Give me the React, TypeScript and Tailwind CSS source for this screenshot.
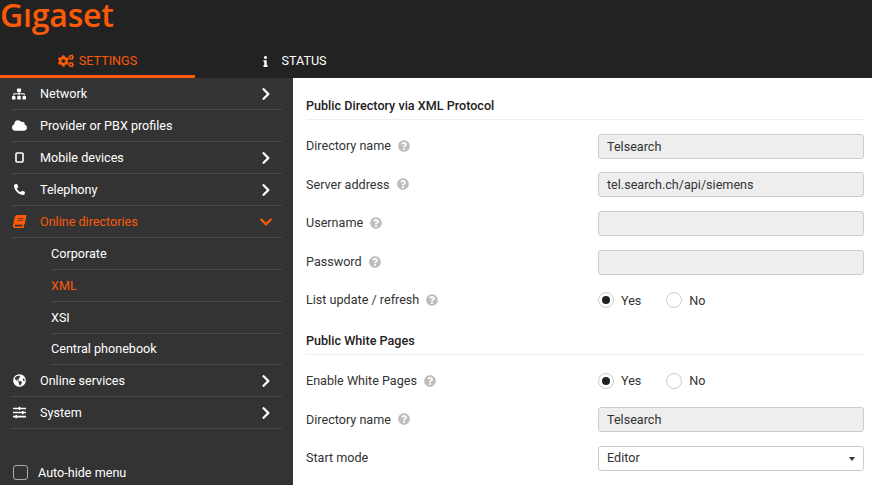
import React from "react";
import { FaCogs, FaInfo, FaSitemap, FaCloud, FaPhone, FaBook, FaGlobeAmericas, FaSlidersH, FaChevronRight, FaChevronDown, FaQuestionCircle } from "react-icons/fa";

const Tablet = () => (
  <svg width="9" height="11" viewBox="0 0 9 11"><rect x="1" y="1" width="7" height="9" rx="1" fill="none" stroke="#fff" strokeWidth="1.6" /></svg>
);

function NavRow({ icon, label, arrow, active }: { icon: React.ReactNode; label: string; arrow?: boolean; active?: boolean }) {
  return (
    <div className={`h-8 flex items-center border-b border-[#484848] ${active ? "text-[#fc5a08]" : "text-white"}`}>
      <span className="w-[16px] mr-[13px] flex justify-center items-center">{icon}</span>
      <span className="flex-1 text-[12.6px] pt-[2px]">{label}</span>
      {arrow && <FaChevronRight className="text-[14px] mr-[9px]" />}
      {active && <FaChevronDown className="text-[14px] mr-[9px]" />}
    </div>
  );
}

function SubRow({ label, active, last }: { label: string; active?: boolean; last?: boolean }) {
  return (
    <div className={`${last ? "h-[31px]" : "h-8 pt-[2px]"} flex items-center ml-[40px] border-b border-[#484848] text-[12.6px] ${active ? "text-[#fc5a08]" : "text-white"}`}>{label}</div>
  );
}

function Label({ text, noHelp, low }: { text: string; noHelp?: boolean; low?: boolean }) {
  return (
    <div className="w-[292px] flex items-center gap-[7px] text-[12.6px] text-[#333]">
      <span className={low ? "pt-[2px]" : ""}>{text}</span>
      {!noHelp && <FaQuestionCircle className="text-[12px] text-[#bdbdbd]" />}
    </div>
  );
}

function Input({ value }: { value?: string }) {
  return <div className="w-[266px] h-[25px] rounded-[3px] border border-[#ccc] bg-[#eee] px-2 pt-[1px] flex items-center text-[12.6px] text-[#333]">{value}</div>;
}

function Radio({ on, label }: { on?: boolean; label: string }) {
  return (
    <span className="flex items-center gap-[7px] text-[12.6px] text-[#333]">
      <span className="w-4 h-4 rounded-full border border-[#ccc] flex items-center justify-center bg-white">
        {on && <span className="w-2 h-2 rounded-full bg-[#222]" />}
      </span>
      <span className="pt-[1px]">{label}</span>
    </span>
  );
}

function Row({ label, children, h, noHelp, low }: { label: string; children: React.ReactNode; h: string; noHelp?: boolean; low?: boolean }) {
  return (
    <div className={`flex items-center ${h}`}>
      <Label text={label} noHelp={noHelp} low={low} />
      {children}
    </div>
  );
}

function YesNo() {
  return (
    <div className="flex gap-[25px]">
      <Radio on label="Yes" />
      <Radio label="No" />
    </div>
  );
}

export default function App() {
  return (
    <div className="w-[872px] h-[485px] overflow-hidden flex flex-col font-['Roboto',sans-serif]">
      <header className="h-[78px] bg-[#222] flex flex-col shrink-0">
        <div className="h-[47px] text-[#fc5a08] text-[32px] leading-[29px] font-semibold font-['Open_Sans',sans-serif] tracking-[-0.2px]">Gıgaset</div>
        <nav className="flex h-[31px]">
          <div className="w-[195px] border-b-[3px] border-[#fc5a08] text-[#fc5a08] flex items-center justify-center gap-[5px] text-[12.6px] h-[31px]">
            <FaCogs className="text-[16px]" /> SETTINGS
          </div>
          <div className="w-[196px] text-white flex items-center justify-center gap-[10px] text-[12.6px] pb-[3px] pl-[1px]">
            <FaInfo className="text-[11px]" /> STATUS
          </div>
        </nav>
      </header>
      <div className="flex flex-1 min-h-0">
        <aside className="w-[293px] bg-[#333] pl-[11px] pr-[11px] relative shrink-0">
          <NavRow icon={<FaSitemap className="text-[14px]" />} label="Network" arrow />
          <NavRow icon={<FaCloud className="text-[15px]" />} label="Provider or PBX profiles" />
          <NavRow icon={<Tablet />} label="Mobile devices" arrow />
          <NavRow icon={<FaPhone className="text-[11px] -scale-x-100" />} label="Telephony" arrow />
          <NavRow icon={<FaBook className="text-[13px] -skew-x-12" />} label="Online directories" active />
          <SubRow label="Corporate" />
          <SubRow label="XML" active />
          <SubRow label="XSI" />
          <SubRow label="Central phonebook" last />
          <NavRow icon={<FaGlobeAmericas className="text-[13px]" />} label="Online services" arrow />
          <NavRow icon={<FaSlidersH className="text-[13px]" />} label="System" arrow />
          <div className="absolute left-[13px] bottom-[2px] flex items-center gap-[10px] text-[12.6px] text-white">
            <span className="w-[15px] h-[15px] rounded-[3px] border border-[#aaa]" />
            <span className="pt-[3px]">Auto-hide menu</span>
          </div>
        </aside>
        <main className="flex-1 bg-white pl-[13px] pr-[8px] pt-[14px]">
          <div className="h-[28px] border-b border-[#eee] pt-[2px] flex items-center font-medium text-[12.6px] text-[#222]">Public Directory via XML Protocol</div>
          <Row label="Directory name" h="h-[39px] mt-[7px]"><Input value="Telsearch" /></Row>
          <Row label="Server address" h="h-[37px]" low><Input value="tel.search.ch/api/siemens" /></Row>
          <Row label="Username" h="h-[41px]"><Input /></Row>
          <Row label="Password" h="h-[37px]"><Input /></Row>
          <Row label="List update / refresh" h="h-[39px]"><YesNo /></Row>
          <div className="h-[30px] mt-[5px] border-b border-[#eee] pt-[4px] flex items-center font-medium text-[12.6px] text-[#222]">Public White Pages</div>
          <Row label="Enable White Pages" h="h-[38px] mt-[7px]"><YesNo /></Row>
          <Row label="Directory name" h="h-[39px]" low><Input value="Telsearch" /></Row>
          <Row label="Start mode" h="h-[38px]" noHelp>
            <div className="w-[266px] h-[25px] rounded-[3px] border border-[#ccc] bg-white pl-2 pr-[8px] pt-[1px] flex items-center justify-between text-[12.6px] text-[#333]">
              Editor
              <span className="w-0 h-0 border-x-[3.5px] border-x-transparent border-t-[4px] border-t-[#333]" />
            </div>
          </Row>
        </main>
      </div>
    </div>
  );
}
